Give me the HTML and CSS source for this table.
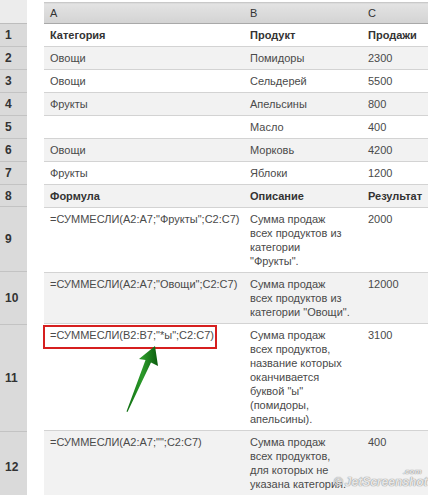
FILE: index.html
```html
<!DOCTYPE html>
<html lang="ru">
<head>
<meta charset="utf-8">
<title>СУММЕСЛИ</title>
<link rel="stylesheet" href="styles.css">
</head>
<body>
<div class="sheet">
  <div class="gutter">
    <div class="g g-head"></div>
    <div class="g h23">1</div>
    <div class="g h23">2</div>
    <div class="g h23">3</div>
    <div class="g h23">4</div>
    <div class="g h23">5</div>
    <div class="g h23">6</div>
    <div class="g h23">7</div>
    <div class="g h22">8</div>
    <div class="g h65">9</div>
    <div class="g h53">10</div>
    <div class="g h107">11</div>
    <div class="g h70">12</div>
  </div>
  <table class="data">
    <colgroup><col class="ca"><col class="cb"><col class="cc"></colgroup>
    <tr class="head"><td>A</td><td>B</td><td>C</td></tr>
    <tr class="bold"><td>Категория</td><td>Продукт</td><td>Продажи</td></tr>
    <tr class="alt"><td>Овощи</td><td>Помидоры</td><td>2300</td></tr>
    <tr><td>Овощи</td><td>Сельдерей</td><td>5500</td></tr>
    <tr class="alt"><td>Фрукты</td><td>Апельсины</td><td>800</td></tr>
    <tr><td></td><td>Масло</td><td>400</td></tr>
    <tr class="alt"><td>Овощи</td><td>Морковь</td><td>4200</td></tr>
    <tr><td>Фрукты</td><td>Яблоки</td><td>1200</td></tr>
    <tr class="alt bold"><td>Формула</td><td>Описание</td><td>Результат</td></tr>
    <tr><td>=СУММЕСЛИ(A2:A7;"Фрукты";C2:C7)</td><td>Сумма продаж<br>всех продуктов из<br>категории<br>"Фрукты".</td><td>2000</td></tr>
    <tr class="alt"><td>=СУММЕСЛИ(A2:A7;"Овощи";C2:C7)</td><td>Сумма продаж<br>всех продуктов из<br>категории "Овощи".</td><td>12000</td></tr>
    <tr><td>=СУММЕСЛИ(B2:B7;"*ы";C2:C7)</td><td>Сумма продаж<br>всех продуктов,<br>название которых<br>оканчивается<br>буквой "ы"<br>(помидоры,<br>апельсины).</td><td>3100</td></tr>
    <tr class="alt"><td>=СУММЕСЛИ(A2:A7;"";C2:C7)</td><td>Сумма продаж<br>всех продуктов,<br>для которых не<br>указана категория.</td><td>400</td></tr>
  </table>
</div>
<div class="redbox"></div>
<svg class="arrow" width="428" height="495" viewBox="0 0 428 495">
  <defs>
    <linearGradient id="ag" x1="0" y1="0" x2="1" y2="0">
      <stop offset="0" stop-color="#0f6e12"/>
      <stop offset="0.5" stop-color="#2c9a2a"/>
      <stop offset="1" stop-color="#0b5c0e"/>
    </linearGradient>
  </defs>
  <polygon points="155,346 158,366 151,362.5 127.5,412 126.5,411.5 145.5,360 139,359" fill="url(#ag)"/>
</svg>
<div class="watermark"><span class="copy">©</span>JetScreenshot<span class="com">.com</span></div>
</body>
</html>
```
FILE: styles.css
```css
html, body {
  margin: 0;
  padding: 0;
  background: #fff;
  overflow: hidden;
  width: 428px;
  height: 495px;
}
body {
  font-family: "Liberation Sans", Arial, sans-serif;
  font-size: 11px;
  color: #4a4a4a;
  position: relative;
}
.sheet {
  display: flex;
  gap: 17px;
  align-items: flex-start;
}
.gutter {
  width: 27px;
  flex: none;
  display: flex;
  flex-direction: column;
  background: #dadada;
}
.g {
  box-sizing: border-box;
  display: flex;
  align-items: center;
  padding-left: 5px;
  font-size: 12px;
  font-weight: bold;
  color: #333;
  border-bottom: 1px solid #c3c3c3;
}
.g-head { height: 24px; background: #ececec; border-bottom: 1px solid #bdbdbd; }
.h23 { height: 23px; }
.h22 { height: 22px; }
.h65 { height: 65px; }
.h53 { height: 53px; }
.h107 { height: 107px; }
.h70 { height: 70px; border-bottom: none; }

.data {
  margin-top: 2px;
  border-collapse: collapse;
  width: 400px;
  flex: none;
  table-layout: fixed;
}
.ca { width: 200px; }
.cb { width: 118px; }
.cc { width: 82px; }
.data td {
  padding: 4px 6px 4px 6px;
  line-height: 14px;
  vertical-align: top;
  border-bottom: 1px solid #d3d3d3;
  white-space: nowrap;
}
.data tr.head td {
  padding-top: 3px;
  padding-bottom: 3px;
  background: linear-gradient(#e3e3e3, #d3d3d3);
  border-top: 1px solid #c9c9c9;
  border-bottom: 1px solid #a9a9a9;
  color: #333;
}
.data tr.alt td { background: #f2f2f2; }
.data tr.bold td { font-weight: bold; color: #333; }

.redbox {
  position: absolute;
  left: 43px;
  top: 325px;
  width: 174px;
  height: 24px;
  box-sizing: border-box;
  border: 2px solid #d61f1f;
}
.arrow {
  position: absolute;
  left: 0;
  top: 0;
  pointer-events: none;
}
.watermark {
  position: absolute;
  left: 334px;
  top: 475px;
  font-family: "Liberation Sans", Arial, sans-serif;
  font-style: italic;
  font-weight: bold;
  font-size: 12px;
  color: rgba(255, 255, 255, 0.8);
  text-shadow: 0 0 1px #8c8c8c, 0 0 1px #8c8c8c;
  white-space: nowrap;
}
.watermark .copy { font-style: normal; font-size: 12px; margin-right: 2px; }
.watermark .com {
  position: absolute;
  right: 6px;
  top: -8px;
  font-size: 8px;
}
```
